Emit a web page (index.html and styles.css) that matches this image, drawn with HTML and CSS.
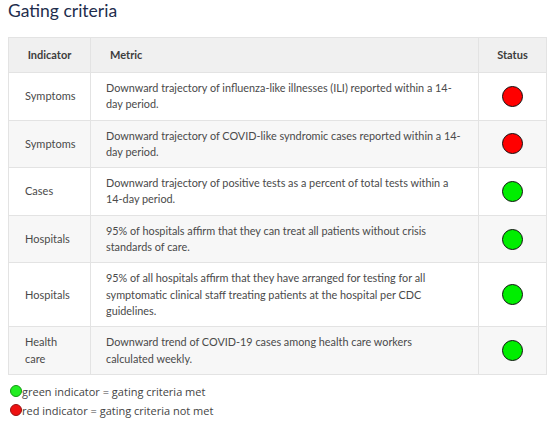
FILE: index.html
```html
<!DOCTYPE html>
<html>
<head>
<meta charset="utf-8">
<link rel="stylesheet" href="styles.css">
</head>
<body>
<h2 class="title">Gating criteria</h2>
<table class="gating">
  <colgroup><col class="w-ind"><col class="w-met"><col class="w-st"></colgroup>
  <thead>
    <tr><th class="c-ind">Indicator</th><th class="c-met">Metric</th><th class="c-st">Status</th></tr>
  </thead>
  <tbody>
    <tr><td class="ind">Symptoms</td><td class="met">Downward trajectory of influenza-like illnesses (ILI) reported within a 14-day period.</td><td class="st"><span class="dot red"></span></td></tr>
    <tr><td class="ind">Symptoms</td><td class="met">Downward trajectory of COVID-like syndromic cases reported within a 14-day period.</td><td class="st"><span class="dot red"></span></td></tr>
    <tr><td class="ind">Cases</td><td class="met">Downward trajectory of positive tests as a percent of total tests within a 14-day period.</td><td class="st"><span class="dot green"></span></td></tr>
    <tr><td class="ind">Hospitals</td><td class="met">95% of hospitals affirm that they can treat all patients without crisis standards of care.</td><td class="st"><span class="dot green"></span></td></tr>
    <tr><td class="ind">Hospitals</td><td class="met">95% of all hospitals affirm that they have arranged for testing for all symptomatic clinical staff treating patients at the hospital per CDC guidelines.</td><td class="st"><span class="dot green"></span></td></tr>
    <tr><td class="ind">Health care</td><td class="met">Downward trend of COVID-19 cases among health care workers calculated weekly.</td><td class="st"><span class="dot green"></span></td></tr>
  </tbody>
</table>
<div class="legend">
  <div class="leg-row"><span class="ldot green"></span>green indicator = gating criteria met</div>
  <div class="leg-row"><span class="ldot red"></span>red indicator = gating criteria not met</div>
</div>
</body>
</html>
```
FILE: styles.css
```css
html, body { margin: 0; padding: 0; background: #fff; }
body { padding: 0 4px 0 8px; font-family: Lato, "Open Sans", sans-serif; color: #4a4a4a; }
.title { margin: 0; font-size: 17.5px; font-weight: 400; line-height: 22px; color: #1e2d4d; }
.gating {
  margin-top: 15px;
  width: 539px;
  table-layout: fixed;
  border-collapse: collapse;
  border: 1px solid #d8d8d8;
  font-size: 11px;
  line-height: 16.3px;
}
.w-ind { width: 82px; }
.w-st { width: 68px; }
.gating th, .gating td { border: 1px solid #e3e3e3; vertical-align: middle; }
.gating th { background: #f0f0f0; font-weight: 700; color: #3d3d3d; height: 34px; padding: 0; }
.c-ind { text-align: center; }
.c-met { text-align: left; padding-left: 19px !important; }
.c-st { text-align: center; }
.gating td { padding: 7px 16px; }
.gating td.met { padding-left: 15px; padding-right: 17px; font-size: 10.85px; }
.gating tbody tr:nth-child(even) td { background: #f7f7f7; }
.st { text-align: center; }
.dot { display: inline-block; width: 19px; height: 19px; border: 1.5px solid #111; border-radius: 50%; vertical-align: middle; }
.dot.red { background: #ff0000; }
.dot.green { background: #00ee00; }
.legend { margin-top: 7px; font-family: "Open Sans", Lato, sans-serif; font-size: 11px; line-height: 19px; color: #444; }
.leg-row { display: flex; align-items: flex-end; }
.ldot { display: inline-block; width: 12px; height: 12px; border-radius: 50%; margin: 0 0 4px 2px; box-sizing: border-box; }
.ldot.green { background: #22ee22; border: 1px solid #119911; }
.ldot.red { background: #ee1111; border: 1px solid #991111; }
```
